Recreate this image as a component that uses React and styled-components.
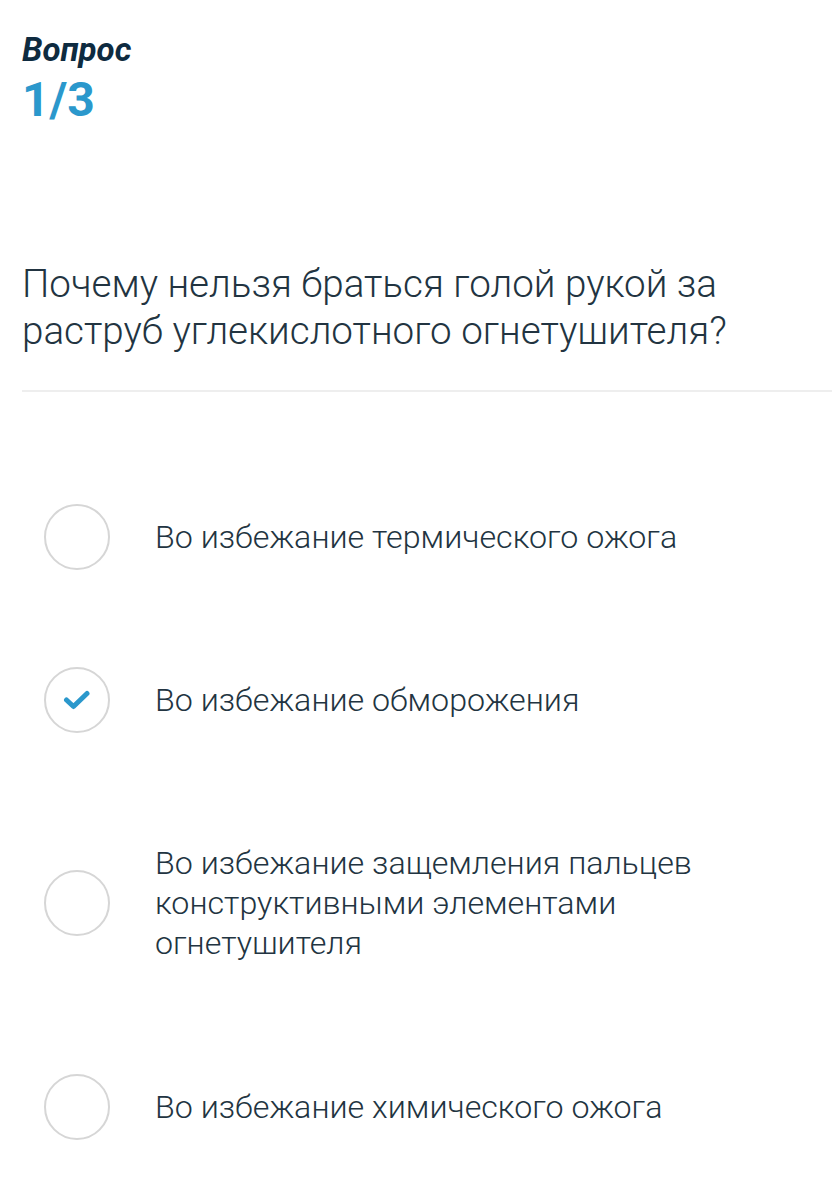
import React from "react";
import styled, { createGlobalStyle } from "styled-components";

const Global = createGlobalStyle`
  html, body { margin: 0; padding: 0; background: #ffffff; }
  body { font-family: Roboto, "Noto Sans", Arial, sans-serif; }
`;

const Page = styled.div`
  width: 832px;
  min-height: 1200px;
  background: #fff;
  box-sizing: border-box;
  padding: 32px 0 0 22px;
`;

const Label = styled.div`
  font-family: Roboto, Arial, sans-serif;
  font-style: italic;
  font-weight: 700;
  font-size: 33px;
  line-height: 36px;
  color: #0e2b40;
`;

const Counter = styled.div`
  font-family: Roboto, Arial, sans-serif;
  font-weight: 700;
  font-size: 48px;
  line-height: 52px;
  color: #2b98cc;
  margin-top: 6px;
`;

const Question = styled.h1`
  margin: 134px 0 0 0;
  padding-right: 60px;
  font-family: Roboto, Arial, sans-serif;
  font-weight: 300;
  font-size: 38.6px;
  line-height: 47px;
  color: #223441;
`;

const Divider = styled.hr`
  border: 0;
  height: 2px;
  background: #eeeeee;
  margin: 36px 0 0 0;
`;

const Options = styled.ul`
  list-style: none;
  margin: 112px 0 0 0;
  padding: 0;
  display: flex;
  flex-direction: column;
`;

const Option = styled.li`
  display: flex;
  align-items: center;
  gap: 45px;
  padding-left: 22px;
  min-height: 66px;
  margin-bottom: ${(p) => p.$gap}px;
`;

const Radio = styled.span`
  flex: 0 0 auto;
  width: 66px;
  height: 66px;
  border-radius: 50%;
  border: 2px solid #d6d6d6;
  box-sizing: border-box;
  display: flex;
  align-items: center;
  justify-content: center;
  background: #fff;
`;

const OptionText = styled.span`
  font-family: Roboto, Arial, sans-serif;
  font-weight: 300;
  font-size: 32.2px;
  line-height: 40px;
  color: #223441;
  max-width: 580px;
`;

const Check = () => (
  <svg width="28" height="22" viewBox="0 0 28 22">
    <path
      d="M3.5 11 L10.5 17.5 L24 4.5"
      fill="none"
      stroke="#2b98cc"
      strokeWidth="5"
      strokeLinecap="round"
      strokeLinejoin="round"
    />
  </svg>
);

const options = [
  { text: "Во избежание термического ожога", checked: false, gap: 97 },
  { text: "Во избежание обморожения", checked: true, gap: 110 },
  {
    text: "Во избежание защемления пальцев конструктивными элементами огнетушителя",
    checked: false,
    gap: 111,
  },
  { text: "Во избежание химического ожога", checked: false, gap: 0 },
];

export default function App() {
  return (
    <>
      <Global />
      <Page>
        <Label>Вопрос</Label>
        <Counter>1/3</Counter>
        <Question>Почему нельзя браться голой рукой за раструб углекислотного огнетушителя?</Question>
        <Divider />
        <Options>
          {options.map((o, i) => (
            <Option key={i} $gap={o.gap}>
              <Radio>{o.checked && <Check />}</Radio>
              <OptionText>{o.text}</OptionText>
            </Option>
          ))}
        </Options>
      </Page>
    </>
  );
}
